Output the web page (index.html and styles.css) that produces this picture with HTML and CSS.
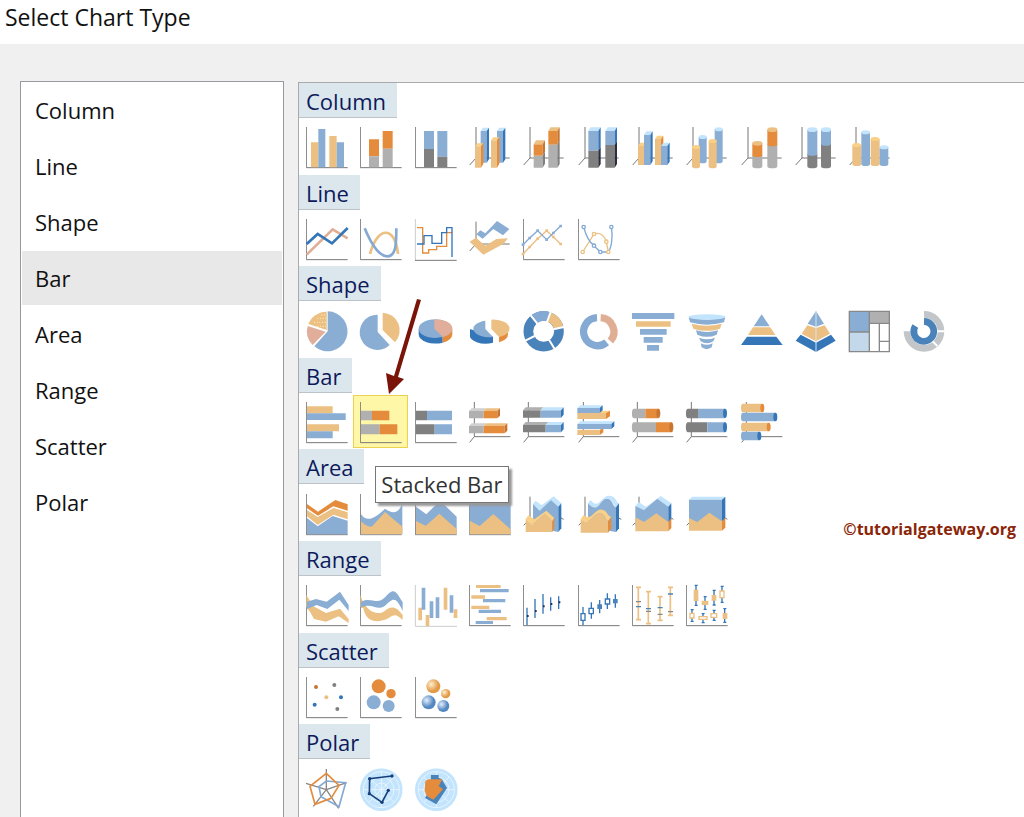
FILE: index.html
```html
<!DOCTYPE html>
<html lang="en">
<head>
<meta charset="UTF-8">
<meta name="viewport" content="width=device-width, initial-scale=1.0">
<title>Select Chart Type</title>
<link rel="stylesheet" href="styles.css">
</head>
<body>

<!-- shared axes and colours for the chart icons -->
<svg class="defs" aria-hidden="true">
    <symbol id="axis" viewBox="0 0 126 126"><path class="ax" d="M1 0V122H125"/></symbol>
    <symbol id="axis3d" viewBox="0 0 126 126"><path class="ax" d="M21 0V93H122M21 93L2 114"/></symbol>
    <symbol id="axisbar" viewBox="0 0 126 126"><path class="ax" d="M16 0V104H124M16 104L2 121"/></symbol>
    <radialGradient id="ball_o" cx=".35" cy=".35"><stop offset="0" stop-color="#fff0d0"/><stop offset="1" stop-color="#e39a48"/></radialGradient>
    <radialGradient id="ball_b" cx=".35" cy=".35"><stop offset="0" stop-color="#e4f0ff"/><stop offset="1" stop-color="#5488c0"/></radialGradient>
    <symbol id="web" viewBox="0 0 128 128">
        <circle class="l" cx="64" cy="64" r="64"/>
        <g class="ring"><circle cx="64" cy="64" r="54"/><circle cx="64" cy="64" r="38"/><circle cx="64" cy="64" r="20"/><path d="M64 10V118M10 64H118M26 26L102 102M102 26L26 102"/></g>
    </symbol>
</svg>

<header class="title-bar">
    <h1>Select Chart Type</h1>
</header>

<main class="dialog">
<nav class="categories">
    <button type="button">Column</button>
    <button type="button">Line</button>
    <button type="button">Shape</button>
    <button type="button" class="selected">Bar</button>
    <button type="button">Area</button>
    <button type="button">Range</button>
    <button type="button">Scatter</button>
    <button type="button">Polar</button>
</nav>

<div class="charts">

<section>
<h2>Column</h2>
<div class="tiles">
    <button type="button" aria-label="Column"><svg viewBox="0 0 126 126"><use href="#axis"/><path class="t" d="M15 46h22v75h-22zM70 27h22v94h-22z"/><path class="b" d="M37 6h21v115h-21zM92 46h22v75h-22z"/></svg></button>
    <button type="button" aria-label="Stacked Column"><svg viewBox="0 0 126 126"><use href="#axis"/><path class="o" d="M27 37h30v51h-30zM68 12h30v53h-30z"/><path class="g" d="M27 88h30v33h-30zM68 65h30v56h-30z"/></svg></button>
    <button type="button" aria-label="100% Stacked Column"><svg viewBox="0 0 126 126"><use href="#axis"/><path class="b" d="M27 12h30v54h-30zM67 12h30v77h-30z"/><path class="k" d="M27 66h30v55h-30zM67 89h30v32h-30z"/></svg></button>
    <button type="button" aria-label="3-D Column"><svg viewBox="0 0 126 126"><use href="#axis3d"/>
        <path class="b" d="M35 12h18v95h-18zM84 12h18v95h-18z"/><path class="l" d="M35 12l7-10h18l-7 10zM84 12l7-10h18l-7 10z"/><path class="d" d="M53 12l7-10v95l-7 10zM102 12l7-10v95l-7 10z"/>
        <path class="t" d="M18 58h18v64h-18zM66 40h18v82h-18z"/><path class="y" d="M18 58l7-9h18l-7 9zM66 40l7-9h18l-7 9z"/><path class="o" d="M36 58l7-9v61l-7 12zM84 40l7-9v79l-7 12z"/></svg></button>
    <button type="button" aria-label="3-D Stacked Column"><svg viewBox="0 0 126 126"><use href="#axis3d"/>
        <path class="o" d="M32 52h27v34h-27zM76 12h27v41h-27z"/><path class="g" d="M32 86h27v36h-27zM76 53h27v69h-27z"/><path class="t" d="M32 52l7-12h27l-7 12zM76 12l7-11h27l-7 11z"/><path class="r" d="M59 52l7-12v34l-7 12zM103 12l7-11v41l-7 11z"/><path class="k" d="M59 86l7-12v36l-7 12zM103 53l7-11v69l-7 11z"/></svg></button>
    <button type="button" aria-label="3-D 100% Stacked Column"><svg viewBox="0 0 126 126"><use href="#axis3d"/>
        <path class="b" d="M31 12h30v59h-30zM82 12h28v42h-28z"/><path class="k" d="M31 71h30v51h-30zM82 54h28v68h-28z"/><path class="l" d="M31 12l7-11h30l-7 11zM82 12l7-11h28l-7 11z"/><path class="d" d="M61 12l7-11v59l-7 11zM110 12l7-11v42l-7 11z"/><path class="n" d="M61 71l7-11v51l-7 11zM110 54l7-11v68l-7 11z"/></svg></button>
    <button type="button" aria-label="3-D Clustered Column"><svg viewBox="0 0 126 126"><use href="#axis3d"/>
        <path class="t" d="M18 57h18v57h-18zM69 36h18v78h-18z"/><path class="y" d="M18 57l7-10h18l-7 10zM69 36l7-10h18l-7 10z"/><path class="o" d="M87 36l7-10v78l-7 10z"/>
        <path class="b" d="M36 24h19v90h-19zM87 57h19v57h-19z"/><path class="l" d="M36 24l7-11h19l-7 11zM87 57l7-10h19l-7 10z"/><path class="d" d="M55 24l7-11v90l-7 11zM106 57l7-10v57l-7 10z"/></svg></button>
    <button type="button" aria-label="3-D Cylinder"><svg viewBox="0 0 126 126"><use href="#axis3d"/>
        <path class="b" d="M38 30v73a12 6 0 0 0 24 0v-73zM86 7v96a12 6 0 0 0 24 0v-96z"/><g class="l"><ellipse cx="50" cy="30" rx="12" ry="6"/><ellipse cx="98" cy="7" rx="12" ry="6"/></g>
        <path class="t" d="M18 60v58a12 6 0 0 0 24 0v-58zM68 42v76a12 6 0 0 0 24 0v-76z"/><g class="y"><ellipse cx="30" cy="60" rx="12" ry="6"/><ellipse cx="80" cy="42" rx="12" ry="6"/></g></svg></button>
    <button type="button" aria-label="3-D Stacked Cylinder"><svg viewBox="0 0 126 126"><use href="#axis3d"/>
        <path class="g" d="M34 84v34a15 6 0 0 0 30 0v-34zM79 52v66a15 6 0 0 0 30 0v-66z"/><path class="o" d="M34 49v35a15 6 0 0 0 30 0v-35zM79 8v44a15 6 0 0 0 30 0v-44z"/><g class="t"><ellipse cx="49" cy="49" rx="15" ry="7"/><ellipse cx="94" cy="8" rx="15" ry="7"/></g></svg></button>
    <button type="button" aria-label="3-D 100% Stacked Cylinder"><svg viewBox="0 0 126 126"><use href="#axis3d"/>
        <path class="k" d="M37 80v38a15 6 0 0 0 30 0v-38zM78 50v68a15 6 0 0 0 30 0v-68z"/><path class="b" d="M37 8v72a15 6 0 0 0 30 0v-72zM78 8v42a15 6 0 0 0 30 0v-42z"/><g class="l"><ellipse cx="52" cy="8" rx="15" ry="7"/><ellipse cx="93" cy="8" rx="15" ry="7"/></g></svg></button>
    <button type="button" aria-label="3-D Clustered Cylinder"><svg viewBox="0 0 126 126"><use href="#axis3d"/>
        <path class="t" d="M10 54v57a13 6 0 0 0 27 0v-57zM65 36v75a13 6 0 0 0 27 0v-75z"/><path class="b" d="M37 16v95a13 6 0 0 0 26 0v-95zM92 61v50a13 6 0 0 0 26 0v-50z"/><g class="y"><ellipse cx="23" cy="54" rx="13" ry="6"/><ellipse cx="78" cy="36" rx="13" ry="6"/></g><g class="l"><ellipse cx="50" cy="16" rx="13" ry="6"/><ellipse cx="105" cy="61" rx="13" ry="6"/></g></svg></button>
</div>
</section>

<section>
<h2>Line</h2>
<div class="tiles">
    <button type="button" aria-label="Line"><svg viewBox="0 0 126 126"><use href="#axis"/><path class="line pl" d="M2 107L80 31L125 58"/><path class="line dl" d="M2 75L35 45L78 73L125 27"/></svg></button>
    <button type="button" aria-label="Smooth Line"><svg viewBox="0 0 126 126"><use href="#axis"/><path class="line tl" d="M30 105C52 20 106 20 114 105"/><path class="line bl" d="M14 28C40 90 62 112 82 112C108 112 109 76 109 28"/></svg></button>
    <button type="button" aria-label="Stepped Line"><svg viewBox="0 0 126 126"><path class="ax pale" d="M1 0V124"/><path class="ax" d="M0 124H125"/><path class="thin ol" d="M6 26H23V102H41V92H65V82H95V41H112"/><path class="thin dl" d="M6 75H27V50H51V73H80V41H95V26H111V114"/></svg></button>
    <button type="button" aria-label="3-D Line"><svg viewBox="0 0 126 126"><path class="ax" d="M21 8V75H122M21 75L2 96"/><path class="b" d="M22 46L34 34L49 43L84 6L121 30L102 49L73 30L41 59z"/><path class="t" d="M2 68L21 56L49 80L82 60L117 58L104 74L43 107z"/></svg></button>
    <button type="button" aria-label="Line with Markers"><svg viewBox="0 0 126 126"><use href="#axis"/><path class="thin tl" d="M0 105L20 84L44 59L71 35L91 54L113 75"/><path class="thin bl" d="M0 77L20 57L44 35L71 62L91 42L113 21"/><path class="t" d="M-4 101h8v8h-8zM16 80h8v8h-8zM40 55h8v8h-8zM67 31h8v8h-8zM87 50h8v8h-8zM109 71h8v8h-8z"/><path class="b" d="M-4 73h8v8h-8zM16 53h8v8h-8zM40 31h8v8h-8zM67 58h8v8h-8zM87 38h8v8h-8zM109 17h8v8h-8z"/></svg></button>
    <button type="button" aria-label="Smooth Line with Markers"><svg viewBox="0 0 126 126"><use href="#axis"/><g class="thin tl"><path d="M14 99L48 45C66 38 80 50 85 68L91 99"/><circle cx="14" cy="99" r="5"/><circle cx="48" cy="45" r="5"/><circle cx="85" cy="68" r="5"/></g><g class="thin bl"><path d="M17 24C24 50 34 70 48 80L67 99H91C101 85 105 50 100 24"/><circle cx="17" cy="24" r="5"/><circle cx="48" cy="80" r="5"/><circle cx="67" cy="99" r="5"/><circle cx="100" cy="24" r="5"/></g><circle class="thin tl" cx="91" cy="99" r="5"/></svg></button>
</div>
</section>

<section>
<h2>Shape</h2>
<div class="tiles">
    <button type="button" aria-label="Pie"><svg viewBox="0 0 126 126"><path class="b" d="M65 1A60 60 0 1 1 25 106L65 61z"/><path class="p" d="M59 62L20 102A58 58 0 0 1 5 45z"/><path class="t" d="M62 57L7 39A60 60 0 0 1 62 2z"/><path class="specks" d="M24 34H60M34 22H60M34 46H60M46 12H60"/></svg></button>
    <button type="button" aria-label="Exploded Pie"><svg viewBox="0 0 126 126"><path class="b" d="M53 11A53 53 0 1 0 89 102L53 63z"/><path class="t" d="M68 5A53 53 0 0 1 105 94L68 57z"/></svg></button>
    <button type="button" aria-label="3-D Pie"><svg viewBox="0 0 126 126"><path class="d" d="M11 54v16a50 28 0 0 0 72 25v-18z"/><path class="o" d="M83 78v17a50 28 0 0 0 29-25v-17z"/><ellipse class="b" cx="61" cy="53" rx="50" ry="28"/><path class="p" d="M58 25A51 28 0 0 1 84 78L58 53z"/></svg></button>
    <button type="button" aria-label="3-D Exploded Pie"><svg viewBox="0 0 126 126"><path class="d" d="M3 54v16a47 25 0 0 0 69 25v-18z"/><path class="b" d="M49 29A47 25 0 1 0 72 78L49 54z"/><path class="o" d="M90 78v16a50 27 0 0 0 27-24v-17z"/><path class="t" d="M67 26A50 27 0 0 1 90 78L67 54z"/></svg></button>
    <button type="button" aria-label="Doughnut"><svg viewBox="0 0 126 126"><g class="donut"><circle class="ml" cx="62" cy="61" r="46"/><path class="bl" d="M33 25A46 46 0 0 1 78 18"/><path class="tl" d="M78 18A46 46 0 0 1 107 51"/></g><path class="cut" d="M43 38L23 13M72 33L83 3M91 55L123 48M78 86L95 114M35 75L7 89"/></svg></button>
    <button type="button" aria-label="Exploded Doughnut"><svg viewBox="0 0 126 126"><g class="ring-arc"><path class="bl" d="M57 20A42 42 0 1 0 86 94"/><path class="pl" d="M68 20A42 42 0 0 1 97 90"/></g></svg></button>
    <button type="button" aria-label="Funnel"><svg viewBox="0 0 126 126"><path class="b" d="M0 6h127v18H0zM24 54h80v17H24zM35 78h57v17H35zM45 102h36v17H45z"/><path class="t" d="M12 31h104v16H12z"/></svg></button>
    <button type="button" aria-label="3-D Funnel"><svg viewBox="0 0 126 126"><path class="b" d="M8 18Q63 34 118 18L114 34Q63 48 12 34zM30 58Q63 68 96 58L92 71Q63 84 34 71zM39 80Q63 89 87 80L82 91Q63 103 44 91zM44 97Q62 106 80 97L77 109Q62 120 47 109z"/><path class="t" d="M17 38Q63 50 107 38L102 53Q63 66 22 53z"/><ellipse class="l" cx="63" cy="18" rx="55" ry="8"/></svg></button>
    <button type="button" aria-label="Pyramid"><svg viewBox="0 0 126 126"><path class="b" d="M62 10L86 46H38z"/><path class="t" d="M36 49H88L103 72H21z"/><path class="d" d="M18 77H106L125 102H0z"/></svg></button>
    <button type="button" aria-label="3-D Pyramid"><svg viewBox="0 0 126 126"><path class="b" d="M63 0L87 38L63 47L38 38z"/><path class="t" d="M37 43L63 51L89 43L105 68L63 91L20 68z"/><path class="d" d="M17 71L63 95L108 71L122 89L63 123L2 89z"/><path class="seam" d="M63 0V123"/></svg></button>
    <button type="button" aria-label="Tree Map"><svg viewBox="0 0 126 126"><path class="b" d="M1 1h60v62h-60z"/><path class="c" d="M1 63h60v60h-60z"/><path class="g" d="M61 1h60v36h-60z"/><path class="thin kl" d="M1 1H121V122H1zM61 1V122M1 63H61M61 37H121M91 37V122M91 91H121"/></svg></button>
    <button type="button" aria-label="Sunburst"><svg viewBox="0 0 126 126"><path class="sun gl" d="M60 10A51 51 0 1 1 9 61"/><path class="sun ml" d="M60 31A30 30 0 1 1 34 45"/><path class="cut" d="M100 61H123M86 91L100 105"/></svg></button>
</div>
</section>

<section>
<h2>Bar</h2>
<div class="tiles">
    <button type="button" aria-label="Bar"><svg viewBox="0 0 126 126"><use href="#axis"/><path class="t" d="M3 13h77v21h-77zM3 67h96v21h-96z"/><path class="b" d="M3 34h116v20h-116zM3 88h77v21h-77z"/></svg></button>
    <button type="button" class="active" aria-describedby="tip" aria-label="Stacked Bar"><svg viewBox="0 0 126 126"><use href="#axis"/><path class="g" d="M3 26h33v29h-33zM3 67h56v30h-56z"/><path class="o" d="M36 26h52v29h-52zM59 67h53v30h-53z"/></svg><span class="tooltip" id="tip" role="tooltip">Stacked Bar</span></button>
    <button type="button" aria-label="100% Stacked Bar"><svg viewBox="0 0 126 126"><use href="#axis"/><path class="k" d="M3 26h33v29h-33zM3 67h56v30h-56z"/><path class="b" d="M36 26h75v29h-75zM59 67h52v30h-52z"/></svg></button>
    <button type="button" aria-label="3-D Stacked Bar"><svg viewBox="0 0 126 126"><use href="#axisbar"/>
        <path class="g" d="M0 27h44v22h-44zM0 72h44v22h-44z"/><path class="o" d="M44 27h41v22h-41zM44 72h63v22h-63z"/><path class="gg" d="M0 27l8-8h44l-8 8zM0 72l8-8h44l-8 8z"/><path class="t" d="M44 27l8-8h41l-8 8zM44 72l8-8h63l-8 8z"/><path class="r" d="M85 27l8-8v22l-8 8zM107 72l8-8v22l-8 8z"/></svg></button>
    <button type="button" aria-label="3-D 100% Stacked Bar"><svg viewBox="0 0 126 126"><use href="#axisbar"/>
        <path class="k" d="M0 25h53v22h-53zM0 69h68v22h-68z"/><path class="b" d="M53 25h61v22h-61zM68 69h46v22h-46z"/><path class="g" d="M0 25l8-9h53l-8 9zM0 69l8-9h68l-8 9z"/><path class="l" d="M53 25l8-9h61l-8 9zM68 69l8-9h46l-8 9z"/><path class="d" d="M114 25l8-9v22l-8 9zM114 69l8-9v22l-8 9z"/></svg></button>
    <button type="button" aria-label="3-D Clustered Bar"><svg viewBox="0 0 126 126"><use href="#axisbar"/>
        <path class="t" d="M-2 33h86v18h-86zM-2 83h68v16h-68z"/><path class="y" d="M60 33l12-7h24l-12 7z"/><path class="o" d="M84 33l12-7v17l-12 8zM66 83l10-6v14l-10 8z"/>
        <path class="b" d="M-2 18h67v15h-67zM-2 66h102v15h-102z"/><path class="l" d="M-2 18l9-8h67l-9 8zM-2 66l9-8h102l-9 8z"/><path class="d" d="M65 18l9-8v15l-9 8zM100 66l9-8v15l-9 8z"/></svg></button>
    <button type="button" aria-label="Stacked Bar Cylinder"><svg viewBox="0 0 126 126"><use href="#axisbar"/>
        <path class="g" d="M40 20H6a6 14 0 0 0 0 29H40zM72 61H6a6 14 0 0 0 0 30H72z"/><path class="o" d="M40 20H79v29H40zM72 61H118v30H72z"/><g class="r"><ellipse cx="79" cy="34" rx="6" ry="14"/><ellipse cx="118" cy="76" rx="6" ry="15"/></g></svg></button>
    <button type="button" aria-label="100% Stacked Bar Cylinder"><svg viewBox="0 0 126 126"><use href="#axisbar"/>
        <path class="k" d="M38 20H6a6 14 0 0 0 0 29H38zM64 61H6a6 14 0 0 0 0 30H64z"/><path class="b" d="M38 20H117v29H38zM64 61H117v30H64z"/><g class="d"><ellipse cx="117" cy="34" rx="6" ry="14"/><ellipse cx="117" cy="76" rx="6" ry="15"/></g></svg></button>
    <button type="button" aria-label="Clustered Bar Cylinder"><svg viewBox="0 0 126 126"><use href="#axisbar"/>
        <path class="t" d="M64 5H6a6 13 0 0 0 0 26H64zM83 62H6a6 13 0 0 0 0 26H83z"/><path class="b" d="M103 32H6a6 13 0 0 0 0 26H103zM55 89H6a6 13 0 0 0 0 26H55z"/><g class="o"><ellipse cx="64" cy="18" rx="6" ry="13"/><ellipse cx="83" cy="75" rx="6" ry="13"/></g><g class="d"><ellipse cx="103" cy="45" rx="6" ry="13"/><ellipse cx="55" cy="102" rx="6" ry="13"/></g></svg></button>
</div>
</section>

<section>
<h2>Area</h2>
<div class="tiles">
    <button type="button" aria-label="Stacked Area"><svg viewBox="0 0 126 126"><use href="#axis"/><path class="o" d="M3 30L36 53L88 18L125 31V50L82 37L36 65L3 43z"/><path class="t" d="M3 48L35 69L83 42L125 55V76L82 62L35 93L3 67z"/><path class="b" d="M3 72L35 97L80 66L125 80V121H3z"/></svg></button>
    <button type="button" aria-label="Smooth Area"><svg viewBox="0 0 126 126"><use href="#axis"/><path class="b" d="M3 60C22 90 50 68 75 44C98 60 115 60 127 28V121H3z"/><path class="t" d="M3 82C20 98 32 102 38 95L75 54L127 98V121H3z"/></svg></button>
    <button type="button" aria-label="Area"><svg viewBox="0 0 126 126"><use href="#axis"/><path class="b" d="M3 38L34 61L75 20L125 68V121H3z"/><path class="t" d="M3 81L32 95L73 59L125 105V121H3z"/></svg></button>
    <button type="button" aria-label="100% Stacked Area"><svg viewBox="0 0 126 126"><use href="#axis"/><path class="b" d="M2 20H125V121H2z"/><path class="t" d="M2 80L32 96L73 60L125 106V121H2z"/></svg></button>
    <button type="button" aria-label="3-D Area"><svg viewBox="0 0 126 126"><path class="ax" d="M21 8V70M2 94L10 86M114 72L122 76"/>
        <path class="l" d="M30 30L38 20L56 34L92 7L115 28L106 38L84 18L50 50z"/><path class="b" d="M30 30L50 50L84 18L106 38V114L30 100z"/><path class="d" d="M106 38L115 28V103L106 114z"/>
        <path class="y" d="M8 76L16 64L34 76L70 50L94 72L88 82L65 60L28 92z"/><path class="t" d="M8 76L28 92L65 60L88 82V114H8z"/><path class="o" d="M88 82L94 72V103L88 114z"/></svg></button>
    <button type="button" aria-label="3-D Smooth Area"><svg viewBox="0 0 126 126"><path class="ax" d="M21 8V70M2 94L10 86M122 72L130 76"/>
        <path class="l" d="M30 28L38 18C62 50 70 4 94 5C116 6 114 26 123 28L114 40C102 30 104 12 86 14C64 16 62 62 30 28z"/><path class="b" d="M30 28C62 62 64 16 86 14C104 12 102 36 114 40V114L30 100z"/><path class="d" d="M114 40L123 28V103L114 114z"/>
        <path class="y" d="M8 76L16 64C42 84 48 44 72 47C90 50 88 68 100 68L90 82C78 76 82 58 64 58C44 60 36 98 8 76z"/><path class="t" d="M8 76C36 98 44 60 64 58C82 58 78 80 90 82V116H8z"/><path class="o" d="M90 82L100 70V103L90 116z"/></svg></button>
    <button type="button" aria-label="3-D Stacked Area"><svg viewBox="0 0 126 126"><path class="ax" d="M21 8V40M2 94L10 86M118 72L124 76"/>
        <path class="l" d="M10 36L20 24L42 38L86 6L118 28L109 38L76 14L36 48z"/><path class="b" d="M10 36L36 48L76 14L109 38V96H10z"/><path class="d" d="M109 38L118 28V78L109 84z"/><path class="t" d="M10 70L36 84L73 58L109 84V112H10z"/><path class="o" d="M109 84L118 72V102L109 112z"/></svg></button>
    <button type="button" aria-label="3-D 100% Stacked Area"><svg viewBox="0 0 126 126"><path class="ax" d="M2 94L10 86M118 72L124 76"/>
        <path class="l" d="M9 17L18 8H118L108 17z"/><path class="b" d="M9 17H108V90H9z"/><path class="d" d="M108 17L118 8V74L108 82z"/><path class="t" d="M9 72L34 84L70 56L108 82V110H9z"/><path class="o" d="M108 82L118 71V101L108 110z"/></svg></button>
</div>
</section>

<section>
<h2>Range</h2>
<div class="tiles">
    <button type="button" aria-label="Range"><svg viewBox="0 0 126 126"><use href="#axis"/><path class="t" d="M1 30L22 64L60 84L102 71L128 102V114L98 94L60 110L24 102L12 80L1 66z"/><path class="b" d="M3 50L30 42L62 50L102 20L128 60V78L100 44L64 72L32 60L3 72z"/></svg></button>
    <button type="button" aria-label="Smooth Range"><svg viewBox="0 0 126 126"><use href="#axis"/><path class="t" d="M1 30C20 90 60 90 75 77C95 62 108 64 128 90V105C108 85 102 88 85 100C60 112 20 120 10 70L1 66z"/><path class="b" d="M3 50C35 35 48 60 72 40C100 10 104 10 128 52V78C106 30 98 42 75 62C50 80 35 50 3 68z"/></svg></button>
    <button type="button" aria-label="Range Column"><svg viewBox="0 0 126 126"><path class="ax pale" d="M1 0V124H126"/><path class="t" d="M10 68h11v38h-11zM32 90h11v33h-11zM86 8h11v66h-11zM116 73h11v26h-11z"/><path class="b" d="M20 8h11v66h-11zM44 49h11v50h-11zM62 37h11v62h-11zM104 31h11v52h-11z"/></svg></button>
    <button type="button" aria-label="Range Bar"><svg viewBox="0 0 126 126"><use href="#axis"/><path class="t" d="M21 0h74v9h-74zM7 31h41v10h-41zM7 62h54v10h-54zM53 96h60v10h-60z"/><path class="b" d="M33 12h86v10h-86zM42 42h67v10h-67zM29 74h67v10h-67zM20 108h52v9h-52z"/></svg></button>
    <button type="button" aria-label="Stock"><svg viewBox="0 0 126 126"><use href="#axis"/><path class="thin dl" d="M12 68V120M36 42V99M60 27V86M83 37V77M107 34V72"/><path class="n" d="M12 90h5v6h-5zM36 75h5v6h-5zM60 61h5v6h-5zM83 54h5v6h-5zM107 49h5v6h-5z"/></svg></button>
    <button type="button" aria-label="Candlestick"><svg viewBox="0 0 126 126"><use href="#axis"/><g class="thin dl hollow"><path d="M15 66V120M40 52V101M65 45V85M88 25V72M112 28V68"/><path d="M9 86h12v20h-12zM33 70h13v16h-13zM82 42h13v15h-13z"/></g><path class="m" d="M58 58h14v14h-14zM105 42h14v13h-14z"/></svg></button>
    <button type="button" aria-label="Error Bar"><svg viewBox="0 0 126 126"><use href="#axis"/><path class="whisker tl" d="M19 7V104M12 7h15M12 104h15M49 20V116M42 20h15M42 116h15M84 35V106M77 35h15M77 106h15M115 7V91M108 7h15M108 91h15"/><path class="thin kl" d="M12 50h15M42 79h15M77 88h15M108 80h15"/><path class="thin ml" d="M12 65h15M42 71h15M77 68h15M108 27h15"/></svg></button>
    <button type="button" aria-label="Box Plot"><svg viewBox="0 0 126 126"><use href="#axis"/><path class="thin dl" d="M30 0V62M26 1h9M26 61h9M57 34V74M53 35h9M53 73h9M84 15V61M80 16h9M80 60h9M108 3V52M104 4h9M104 52h9M18 74V109M14 74h9M14 109h9M51 86V113M47 86h9M47 113h9M84 76V106M80 76h9M80 106h9M116 70V112M112 71h9M112 112h9"/><path class="t" d="M23 14h14v34h-14zM47 47h20v13h-20zM77 30h14v17h-14zM110 84h14v18h-14z"/><path class="thin tl boxed" d="M102 18h12v20h-12zM12 85h12v14h-12zM39 95h24v8h-24zM75 86h17v11h-17z"/></svg></button>
</div>
</section>

<section>
<h2>Scatter</h2>
<div class="tiles">
    <button type="button" aria-label="Scatter"><svg viewBox="0 0 126 126"><use href="#axis"/><circle class="r" cx="30" cy="30" r="6"/><circle class="k" cx="85" cy="24" r="6"/><circle class="t" cx="61" cy="61" r="6"/><circle class="d" cx="105" cy="61" r="6"/><circle class="d" cx="26" cy="83" r="6"/><circle class="k" cx="94" cy="96" r="6"/></svg></button>
    <button type="button" aria-label="Bubble"><svg viewBox="0 0 126 126"><use href="#axis"/><g class="o"><circle cx="56" cy="28" r="21"/><circle cx="93" cy="50" r="14"/></g><g class="b"><circle cx="41" cy="76" r="21"/><circle cx="86" cy="87" r="18"/></g></svg></button>
    <button type="button" aria-label="3-D Bubble"><svg viewBox="0 0 126 126"><use href="#axis"/><g fill="url(#ball_o)"><circle cx="55" cy="28" r="21"/><circle cx="92" cy="50" r="14"/></g><g fill="url(#ball_b)"><circle cx="41" cy="76" r="21"/><circle cx="85" cy="87" r="18"/></g></svg></button>
</div>
</section>

<section>
<h2>Polar</h2>
<div class="tiles">
    <button type="button" aria-label="Radar"><svg viewBox="0 0 126 126"><path class="thin kl" d="M61 62V0M61 62L122 41M61 62L98 118M61 62L22 112M61 62L0 43"/><path class="radar bl" d="M61 36L119 41L99 113L45 83L39 53z"/><path class="radar ol" d="M61 13L99 49L75 88L27 106L12 52z"/></svg></button>
    <button type="button" aria-label="Polar"><svg viewBox="0 0 126 126"><use href="#web" x="0" y="-2" width="128" height="128"/><path class="radar nl" d="M96 21L29 29L28 74L66 100L85 64"/><g class="nd"><circle cx="96" cy="21" r="5"/><circle cx="29" cy="29" r="5"/><circle cx="28" cy="74" r="5"/><circle cx="66" cy="100" r="5"/><circle cx="85" cy="64" r="5"/></g></svg></button>
    <button type="button" aria-label="Filled Polar"><svg viewBox="0 0 126 126"><use href="#web" x="0" y="-2" width="128" height="128"/><path class="m" d="M48 18H71V26L80 30L96 57L64 106L30 87L46 60z"/><path class="o" d="M31 36L40 31H82L71 51L84 61L55 92L36 82L29 66z"/></svg></button>
</div>
</section>

<svg class="pointer" viewBox="0 0 36 98" aria-hidden="true"><path d="M31 0L35 1L12 78L18 80L3 95L0 74L8 77z"/></svg>
<p class="credit">©tutorialgateway.org</p>

</div>
</main>
</body>
</html>
```
FILE: styles.css
```css
* {
    box-sizing: border-box;
}

body {
    margin: 0;
    min-height: 100vh;
    display: flex;
    flex-direction: column;
    background-color: #f0f0f0;
    color: #111;
    font-family: "Open Sans", "Noto Sans", sans-serif;
    font-size: 22px;
    overflow-x: hidden;
}

h1, h2, p {
    margin: 0;
    font-size: 22px;
    font-weight: normal;
}

button {
    font: inherit;
    color: inherit;
    border: none;
    background: none;
    cursor: pointer;
}

.defs {
    position: absolute;
    width: 0;
    height: 0;
}

.title-bar {
    background-color: #fff;
    padding: 0 5px 10px;
    line-height: 34px;
}

.title-bar h1 {
    font-size: 23px;
}

.dialog {
    flex: 1;
    display: flex;
    gap: 14px;
    padding: 37px 0 0 20px;
}

.categories {
    flex: 0 0 264px;
    display: flex;
    flex-direction: column;
    gap: 2px;
    padding: 1px;
    background-color: #fff;
    border: 1px solid #96999e;
    border-bottom: none;
}

.categories button {
    height: 54px;
    padding: 0 13px;
    text-align: left;
}

.categories .selected {
    background-color: #e8e8e8;
}

.charts {
    position: relative;
    flex: 1;
    min-width: 0;
    margin-top: 1px;
    background-color: #fff;
    border-top: 1px solid #a8abae;
    border-left: 1px solid #a8abae;
}

.charts h2 {
    width: fit-content;
    height: 35px;
    padding: 0 11px 0 7px;
    line-height: 36px;
    color: #0c1a5c;
    background-color: #dce7ed;
    border-bottom: 1px solid #bcc2c6;
}

.tiles {
    display: grid;
    grid-template-columns: repeat(12, 1fr);
    max-width: 652px;
    padding: 2px 0 1px;
}

.tiles button {
    position: relative;
    aspect-ratio: 75 / 74;
    min-width: 0;
    min-height: 0;
    padding: 7px 5px 4px 7px;
    text-align: left;
}

.tiles svg {
    display: block;
    width: 42px;
    height: 42px;
    overflow: visible;
}

.tiles .active {
    background-color: #fff7a8;
    box-shadow: inset 0 0 0 1px #ecd050;
}

.tooltip {
    position: absolute;
    z-index: 2;
    top: 71px;
    left: 22px;
    padding: 0 5px;
    line-height: 35px;
    white-space: nowrap;
    color: #333;
    background-color: #fff;
    border: 1px solid #777;
    box-shadow: 3px 3px 2px #999;
}

.pointer {
    position: absolute;
    top: 216px;
    left: 87px;
    width: 36px;
    height: 98px;
    fill: #7a1408;
}

.credit {
    position: absolute;
    top: 434px;
    right: 8px;
    font-size: 16px;
    font-weight: bold;
    line-height: 24px;
    color: #8a2508;
}

/* icon fills */
.b { fill: #8aadd4; }
.c { fill: #c4d8ec; }
.d { fill: #3476b7; }
.m { fill: #4a82ba; }
.l { fill: #c2e4fd; }
.t { fill: #ebc082; }
.y { fill: #fad086; }
.o { fill: #e48c3c; }
.r { fill: #c8752f; }
.p { fill: #e0ae9a; }
.g { fill: #b0b0b0; }
.gg { fill: #d0d0d0; }
.k { fill: #808080; }
.n { fill: #2b2d3c; }
.nd { fill: #16407a; }

/* icon strokes */
.ax, .line, .thin, .whisker, .radar, .donut, .ring-arc, .sun, .ring { fill: none; }
.ax { stroke: #777; stroke-width: 3; }
.pale { stroke: #ccc; }
.line { stroke-width: 8; }
.thin { stroke-width: 4; }
.whisker { stroke-width: 5; }
.radar { stroke-width: 5; }
.donut { stroke-width: 29; }
.ring-arc { stroke-width: 22; }
.sun { stroke-width: 20; }
.ring { stroke: #e8f4ff; stroke-width: 3; }
.cut { stroke: #fff; stroke-width: 6; }
.seam { stroke: #d4e4f4; stroke-width: 3; }
.specks { stroke: #fff0c8; stroke-width: 3; stroke-dasharray: 3 5; }
.hollow path + path, .boxed, .thin circle, circle.thin { fill: #fff; }
.bl { stroke: #84a9d2; }
.dl { stroke: #3476b7; }
.ml { stroke: #4a82ba; }
.tl { stroke: #ebc082; }
.ol { stroke: #e48c3c; }
.pl { stroke: #e0ae94; }
.gl { stroke: #c2c6c8; }
.kl { stroke: #888; }
.nl { stroke: #16407a; }
```
